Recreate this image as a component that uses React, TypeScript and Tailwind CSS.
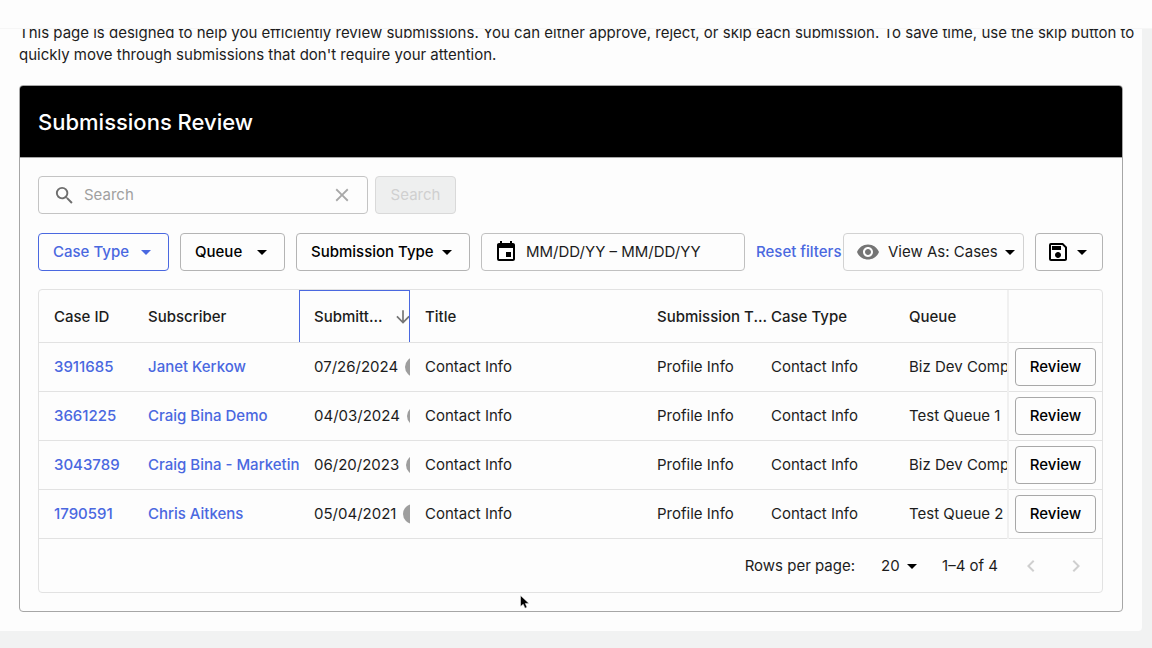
import { FC, ReactNode } from 'react';
import {
  MdArrowDownward,
  MdArrowDropDown,
  MdChevronLeft,
  MdChevronRight,
  MdClose,
  MdEvent,
  MdOutlineSave,
  MdSearch,
  MdVisibility
} from 'react-icons/md';

interface Submission {
  caseId: string;
  subscriber: string;
  submitted: string;
  title: string;
  submissionType: string;
  caseType: string;
  queue: string;
}

const submissions: Submission[] = [
  {
    caseId: '3911685',
    subscriber: 'Janet Kerkow',
    submitted: '07/26/2024',
    title: 'Contact Info',
    submissionType: 'Profile Info',
    caseType: 'Contact Info',
    queue: 'Biz Dev Comp'
  },
  {
    caseId: '3661225',
    subscriber: 'Craig Bina Demo',
    submitted: '04/03/2024',
    title: 'Contact Info',
    submissionType: 'Profile Info',
    caseType: 'Contact Info',
    queue: 'Test Queue 1'
  },
  {
    caseId: '3043789',
    subscriber: 'Craig Bina - Marketin',
    submitted: '06/20/2023',
    title: 'Contact Info',
    submissionType: 'Profile Info',
    caseType: 'Contact Info',
    queue: 'Biz Dev Comp'
  },
  {
    caseId: '1790591',
    subscriber: 'Chris Aitkens',
    submitted: '05/04/2021',
    title: 'Contact Info',
    submissionType: 'Profile Info',
    caseType: 'Contact Info',
    queue: 'Test Queue 2'
  }
];

const FilterButton: FC<{ label: string; className: string }> = ({ label, className }) => (
  <button
    type="button"
    className={`flex h-[38px] shrink-0 items-center justify-between rounded border pr-[10px] pl-[14px] font-medium ${className}`}
  >
    {label}
    <MdArrowDropDown className="size-6 shrink-0" />
  </button>
);

const HeaderCell: FC<{ children?: ReactNode }> = ({ children }) => (
  <th scope="col" className="pt-[2px] pl-[15px] text-left font-medium whitespace-nowrap">
    {children}
  </th>
);

const Cell: FC<{ children: ReactNode }> = ({ children }) => (
  <td className="overflow-hidden pl-[15px] whitespace-nowrap">{children}</td>
);

const Filters: FC = () => (
  <>
    <form className="flex gap-[7px]" onSubmit={e => e.preventDefault()}>
      <div className="flex h-[38px] w-[330px] items-center rounded border border-[#c4c4c4] px-[14px]">
        <MdSearch className="mr-2 size-[23px] shrink-0 text-[#6e6e6e]" />
        <input
          type="text"
          aria-label="Search submissions"
          placeholder="Search"
          className="min-w-0 flex-1 bg-transparent outline-none placeholder:text-[#a0a0a0]"
        />
        <button type="button" aria-label="Clear search" className="text-[#a8a8a8]">
          <MdClose className="size-[22px]" />
        </button>
      </div>
      <button
        type="submit"
        disabled
        className="h-[38px] w-[81px] rounded border border-[#d9d9d9] bg-[#eeefef] text-[#d0d0d0]"
      >
        Search
      </button>
    </form>

    <div className="mt-[19px] flex items-center justify-between whitespace-nowrap">
      <div className="flex items-center gap-[11px]">
        <FilterButton label="Case Type" className="w-[131px] border-[#4a68e0] text-[#4a68e0]" />
        <FilterButton label="Queue" className="w-[105px] border-[#b4b4b4] text-black" />
        <FilterButton label="Submission Type" className="w-[174px] border-[#b4b4b4] text-black" />
        <label className="flex h-[38px] w-[264px] items-center gap-2 rounded border border-[#c0c0c0] px-3">
          <MdEvent className="size-6 shrink-0 text-black" />
          <input
            type="text"
            aria-label="Date range"
            placeholder="MM/DD/YY – MM/DD/YY"
            className="min-w-0 flex-1 bg-transparent outline-none placeholder:text-[#1c1c1c]"
          />
        </label>
        <button type="button" className="font-medium text-[#4a68e0]">
          Reset filters
        </button>
      </div>
      <div className="flex gap-[11px]">
        <button
          type="button"
          className="flex h-[38px] w-[181px] items-center rounded border border-[#d2d2d2] pl-3"
        >
          <MdVisibility className="mr-2 size-6 shrink-0 text-[#757575]" />
          View As: Cases
          <MdArrowDropDown className="size-6 shrink-0 text-black" />
        </button>
        <button
          type="button"
          aria-label="Saved views"
          className="flex h-[38px] w-[68px] items-center rounded border border-[#b4b4b4] pl-[10px] text-black"
        >
          <MdOutlineSave className="size-6 shrink-0" />
          <MdArrowDropDown className="size-6 shrink-0" />
        </button>
      </div>
    </div>
  </>
);

const SubmissionsTable: FC = () => (
  <div className="mt-[18px] rounded border border-[#e2e2e2]">
    <table className="w-full table-fixed border-collapse">
      <colgroup>
        <col className="w-[94px]" />
        <col className="w-[166px]" />
        <col className="w-[111px]" />
        <col />
        <col className="w-[114px]" />
        <col className="w-[138px]" />
        <col className="w-[114px]" />
        <col className="w-[94px]" />
      </colgroup>
      <thead>
        <tr className="h-[52px] border-b border-[#e2e2e2]">
          <HeaderCell>Case ID</HeaderCell>
          <HeaderCell>Subscriber</HeaderCell>
          <th
            scope="col"
            aria-sort="descending"
            className="p-0 text-left font-medium whitespace-nowrap"
          >
            <div className="flex h-[52px] items-center justify-between overflow-hidden border border-b-0 border-[#4a68e0] pl-[14px]">
              Submitt...
              <MdArrowDownward className="-mr-1 size-5 shrink-0 text-[#757575]" />
            </div>
          </th>
          <HeaderCell>Title</HeaderCell>
          <HeaderCell>Submission T...</HeaderCell>
          <HeaderCell>Case Type</HeaderCell>
          <HeaderCell>Queue</HeaderCell>
          <th scope="col" aria-label="Actions" className="border-l-2 border-l-[#f0f0f0]" />
        </tr>
      </thead>
      <tbody>
        {submissions.map(row => (
          <tr key={row.caseId} className="h-[49px] border-b border-[#e2e2e2]">
            <Cell>
              <a href="#case" className="font-medium text-[#4a68e0]">
                {row.caseId}
              </a>
            </Cell>
            <Cell>
              <a href="#subscriber" className="font-medium text-[#4a68e0]">
                {row.subscriber}
              </a>
            </Cell>
            <Cell>
              <div className="flex items-center gap-[7px]">
                {row.submitted}
                <span className="size-5 shrink-0 rounded-full bg-[#9e9e9e]" />
              </div>
            </Cell>
            <Cell>{row.title}</Cell>
            <Cell>{row.submissionType}</Cell>
            <Cell>{row.caseType}</Cell>
            <Cell>{row.queue}</Cell>
            <td className="border-l-2 border-l-[#f0f0f0] px-[6px]">
              <button
                type="button"
                className="h-[38px] w-full rounded border border-[#a8a8a8] font-medium text-black"
              >
                Review
              </button>
            </td>
          </tr>
        ))}
      </tbody>
    </table>

    <div className="flex h-[53px] items-center justify-end pr-[14px]">
      <label htmlFor="rows-per-page">Rows per page:</label>
      <div className="ml-[26px] flex items-center">
        <select
          id="rows-per-page"
          defaultValue="20"
          className="w-[19px] appearance-none bg-transparent outline-none"
        >
          <option>20</option>
          <option>50</option>
        </select>
        <MdArrowDropDown className="pointer-events-none size-6 text-black" />
      </div>
      <span className="ml-[18px]">1–4 of 4</span>
      <button type="button" disabled aria-label="Previous page" className="ml-[21px] text-[#cfcfcf]">
        <MdChevronLeft className="size-6" />
      </button>
      <button type="button" disabled aria-label="Next page" className="ml-[21px] text-[#cfcfcf]">
        <MdChevronRight className="size-6" />
      </button>
    </div>
  </div>
);

const App: FC = () => {
  return (
    <div className="relative min-h-screen bg-[#f1f2f2] font-['Inter','Noto_Sans',sans-serif] text-[15px] leading-[22px] text-[#1c1c1c]">
      {/* Top bar stays over the scrolled page */}
      <header className="fixed inset-x-0 top-0 z-10 h-[29px] border-b border-[#f6f6f6] bg-[#fdfdfd]" />

      <main className="mr-[10px] rounded-br bg-[#fdfdfd] pt-[22px] pb-[19px]">
        <p className="pr-1 pl-[19px]">
          This page is designed to help you efficiently review submissions. You can either approve,
          reject, or skip each submission. To save time, use the skip button to quickly move through
          submissions that don't require your attention.
        </p>

        <section className="mx-[19px] mt-[19px] overflow-hidden rounded border border-[#a6a6a6]">
          <h1 className="flex h-[72px] items-center border-b border-[#a6a6a6] bg-black px-[18px] text-[22px] font-medium text-white">
            Submissions Review
          </h1>
          <div className="py-[18px] pr-[19px] pl-[18px]">
            <Filters />
            <SubmissionsTable />
          </div>
        </section>
      </main>

      {/* Mouse pointer */}
      <svg
        className="pointer-events-none absolute top-[595px] left-[520px] h-[14px] w-[10px]"
        viewBox="0 0 10 14"
        aria-hidden="true"
      >
        <path
          d="M0.5 0.5V11.5L3.2 9.2L5 13.2L7 12.3L5.3 8.4H9Z"
          fill="#000"
          stroke="#fff"
          strokeWidth="0.5"
        />
      </svg>
    </div>
  );
};

export default App;
